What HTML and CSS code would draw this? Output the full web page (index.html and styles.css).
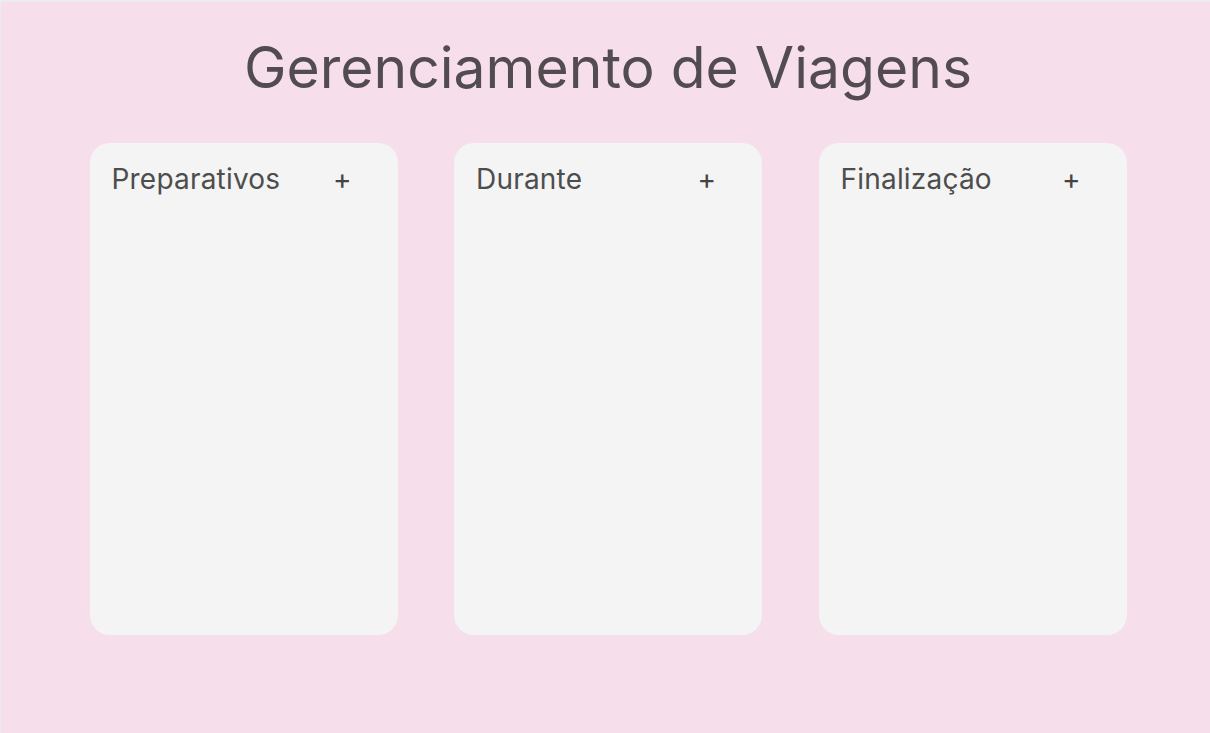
FILE: index.html
```
<!DOCTYPE html>
<html lang="pt-BR">
<head>
<meta charset="utf-8">
<title>Gerenciamento de Viagens</title>
<link rel="stylesheet" href="styles.css">
</head>
<body>
<div class="page">
  <h1 class="title">Gerenciamento de Viagens</h1>
  <div class="board">
    <section class="column">
      <header class="column-header"><span class="column-title">Preparativos</span><button class="add">+</button></header>
    </section>
    <section class="column">
      <header class="column-header"><span class="column-title">Durante</span><button class="add">+</button></header>
    </section>
    <section class="column">
      <header class="column-header"><span class="column-title">Finalização</span><button class="add">+</button></header>
    </section>
  </div>
</div>
</body>
</html>
```
FILE: styles.css
```
html, body {
  margin: 0;
  padding: 0;
  background: #ececec;
}
body {
  font-family: Inter, "Noto Sans", sans-serif;
  padding: 2px 0 0 1px;
}
.page {
  background: #f6dfea;
  height: 731px;
  box-sizing: border-box;
  padding: 34px 0 0 5px;
}
.title {
  margin: 0;
  text-align: center;
  font-size: 57px;
  font-weight: 400;
  line-height: 64px;
  color: #524b50;
}
.board {
  display: flex;
  justify-content: center;
  gap: 56.5px;
  margin-top: 43px;
}
.column {
  width: 308px;
  height: 492px;
  background: #f4f4f4;
  border-radius: 20px;
  box-sizing: border-box;
  padding: 19px 46px 0 22px;
}
.column-header {
  display: flex;
  justify-content: space-between;
  align-items: center;
}
.column-title {
  font-size: 28px;
  letter-spacing: 0.2px;
  line-height: 34px;
  color: #4d4d4d;
}
.add {
  border: 0;
  background: none;
  padding: 0;
  font-family: Inter, sans-serif;
  font-size: 28px;
  line-height: 34px;
  color: #444;
  cursor: pointer;
}
```
